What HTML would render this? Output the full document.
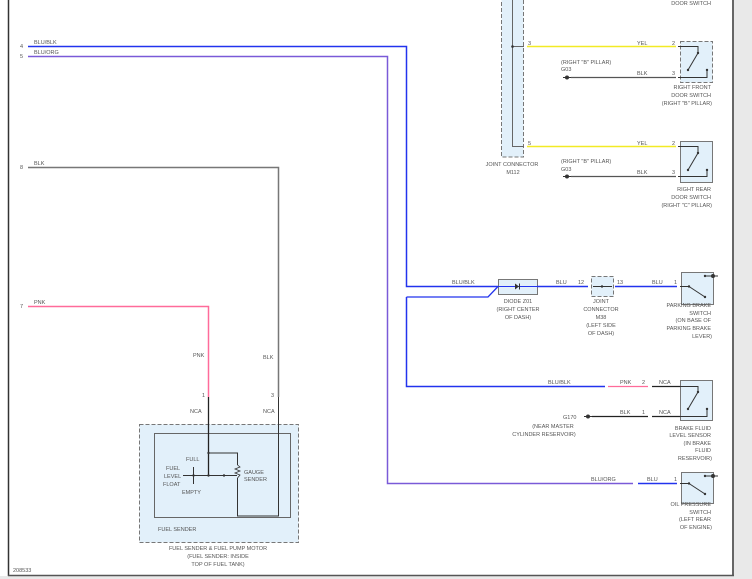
<!DOCTYPE html>
<html><head><meta charset="utf-8"><style>
html,body{margin:0;padding:0;background:#e9e9e9;}
svg{display:block;}
text{font-family:"Liberation Sans",sans-serif;font-size:5.5px;fill:#555;}
.r{text-anchor:end;}
.c{text-anchor:middle;}
</style></head><body>
<svg width="752" height="579" viewBox="0 0 752 579" xmlns="http://www.w3.org/2000/svg">
<rect x="0" y="0" width="734" height="576" fill="#fff"/>
<line x1="8.5" y1="0" x2="8.5" y2="576" stroke="#333" stroke-width="1.5"/>
<line x1="733" y1="0" x2="733" y2="576" stroke="#333" stroke-width="1.5"/>
<line x1="8" y1="575.5" x2="734" y2="575.5" stroke="#555" stroke-width="1.5"/>

<text x="20" y="48">4</text><text x="34" y="44">BLU/BLK</text>
<text x="20" y="58">5</text><text x="34" y="54">BLU/ORG</text>
<text x="20" y="169">8</text><text x="34" y="165">BLK</text>
<text x="20" y="308">7</text><text x="34" y="304">PNK</text>
<polyline points="28,46.5 406.5,46.5 406.5,286.5 498,286.5" fill="none" stroke="#2233ee" stroke-width="1.5"/>
<polyline points="406.5,297 488,297 498,286.5" fill="none" stroke="#2233ee" stroke-width="1.3"/>
<polyline points="406.5,297 406.5,386.5 605,386.5" fill="none" stroke="#2233ee" stroke-width="1.5"/>
<polyline points="28,56.5 387.5,56.5 387.5,483.5 633,483.5" fill="none" stroke="#7a5ad8" stroke-width="1.5"/>
<polyline points="28,167.5 278.5,167.5 278.5,397" fill="none" stroke="#777" stroke-width="1.5"/>
<polyline points="28,306.5 208.5,306.5 208.5,397" fill="none" stroke="#ff6b9a" stroke-width="1.5"/>
<text x="193" y="357">PNK</text><text x="263" y="359">BLK</text>

<rect x="501.5" y="-2" width="22" height="159" fill="#e2f0fa" stroke="#777" stroke-dasharray="4,2"/>
<polyline points="512.5,0 512.5,46.5 524,46.5" fill="none" stroke="#666"/>
<polyline points="512.5,46.5 512.5,146.5 524,146.5" fill="none" stroke="#666"/>
<circle cx="512.5" cy="46.5" r="1.3" fill="#333"/>
<text x="528" y="45">3</text><text x="528" y="145">5</text>
<text x="512" y="166" class="c">JOINT CONNECTOR</text><text x="513" y="174" class="c">M112</text>

<line x1="527" y1="46.5" x2="676" y2="46.5" stroke="#f2ea25" stroke-width="1.6"/>
<line x1="527" y1="146.5" x2="676" y2="146.5" stroke="#f2ea25" stroke-width="1.6"/>
<text x="637" y="45">YEL</text><text x="637" y="145">YEL</text>
<text x="672" y="45">2</text><text x="672" y="145">2</text>
<line x1="571" y1="77.5" x2="676" y2="77.5" stroke="#555" stroke-width="1.2"/>
<line x1="571" y1="176.5" x2="676" y2="176.5" stroke="#555" stroke-width="1.2"/>
<text x="637" y="75">BLK</text><text x="637" y="174">BLK</text>
<text x="672" y="75">3</text><text x="672" y="174">3</text>
<circle cx="567" cy="77.5" r="2" fill="#333"/><line x1="563" y1="77.5" x2="571" y2="77.5" stroke="#333"/>
<circle cx="567" cy="176.5" r="2" fill="#333"/><line x1="563" y1="176.5" x2="571" y2="176.5" stroke="#333"/>
<text x="561" y="64">(RIGHT "B" PILLAR)</text><text x="561" y="71">G03</text>
<text x="561" y="163">(RIGHT "B" PILLAR)</text><text x="561" y="171">G03</text>

<rect x="680.5" y="41.5" width="32" height="41" fill="#e2f0fa" stroke="#777" stroke-dasharray="4,2"/>
<polyline points="678,46.5 698,46.5 698,53" fill="none" stroke="#333"/>
<line x1="698" y1="53" x2="688" y2="70" stroke="#333"/>
<circle cx="698" cy="53" r="1.2" fill="#333"/><circle cx="688" cy="70" r="1.2" fill="#333"/><circle cx="707" cy="70" r="1.2" fill="#333"/>
<polyline points="678,77.5 707,77.5 707,70" fill="none" stroke="#333"/>
<text x="711" y="5" class="r">DOOR SWITCH</text>
<text x="711" y="89" class="r">RIGHT FRONT</text><text x="711" y="97" class="r">DOOR SWITCH</text><text x="712" y="105" class="r">(RIGHT "B" PILLAR)</text>

<rect x="680.5" y="141.5" width="32" height="41" fill="#e2f0fa" stroke="#777"/>
<polyline points="678,146.5 698,146.5 698,153" fill="none" stroke="#333"/>
<line x1="698" y1="153" x2="688" y2="170" stroke="#333"/>
<circle cx="698" cy="153" r="1.2" fill="#333"/><circle cx="688" cy="170" r="1.2" fill="#333"/><circle cx="707" cy="170" r="1.2" fill="#333"/>
<polyline points="678,176.5 707,176.5 707,170" fill="none" stroke="#333"/>
<text x="711" y="191" class="r">RIGHT REAR</text><text x="711" y="199" class="r">DOOR SWITCH</text><text x="712" y="207" class="r">(RIGHT "C" PILLAR)</text>

<text x="452" y="284">BLU/BLK</text>
<rect x="498.5" y="279.5" width="39" height="15" fill="#e2f0fa" stroke="#777"/>
<line x1="498" y1="286.5" x2="537" y2="286.5" stroke="#2233ee"/>
<polygon points="515,283.5 515,289.5 519,286.5" fill="#333"/><line x1="519.5" y1="283.5" x2="519.5" y2="289.5" stroke="#333"/>
<text x="518" y="303" class="c">DIODE Z01</text><text x="518" y="311" class="c">(RIGHT CENTER</text><text x="518" y="319" class="c">OF DASH)</text>
<line x1="537" y1="286.5" x2="588" y2="286.5" stroke="#2233ee" stroke-width="1.5"/>
<text x="556" y="284">BLU</text><text x="578" y="284">12</text>
<rect x="591.5" y="276.5" width="22" height="20" fill="#e2f0fa" stroke="#777" stroke-dasharray="4,2"/>
<line x1="593" y1="286.5" x2="612" y2="286.5" stroke="#333"/><circle cx="602" cy="286.5" r="1.2" fill="#333"/>
<text x="617" y="284">13</text>
<line x1="615" y1="286.5" x2="677" y2="286.5" stroke="#2233ee" stroke-width="1.5"/>
<text x="652" y="284">BLU</text><text x="674" y="284">1</text>
<text x="601" y="303" class="c">JOINT</text><text x="601" y="311" class="c">CONNECTOR</text><text x="601" y="319" class="c">M38</text><text x="601" y="327" class="c">(LEFT SIDE</text><text x="601" y="335" class="c">OF DASH)</text>

<rect x="681.5" y="272.5" width="32" height="32" fill="#e2f0fa" stroke="#777"/>
<line x1="680" y1="286.5" x2="689" y2="286.5" stroke="#333"/>
<line x1="689" y1="286.5" x2="705" y2="297" stroke="#333"/>
<circle cx="689" cy="286.5" r="1.2" fill="#333"/><circle cx="705" cy="297" r="1.2" fill="#333"/>
<line x1="705" y1="276" x2="718" y2="276" stroke="#333"/><circle cx="713" cy="276" r="2" fill="#333"/><circle cx="705" cy="276" r="1.2" fill="#333"/>
<text x="711" y="307" class="r">PARKING BRAKE</text><text x="711" y="315" class="r">SWITCH</text><text x="711" y="322" class="r">(ON BASE OF</text><text x="711" y="330" class="r">PARKING BRAKE</text><text x="712" y="338" class="r">LEVER)</text>

<text x="548" y="384">BLU/BLK</text>
<line x1="608" y1="386.5" x2="648" y2="386.5" stroke="#ff6b9a" stroke-width="1.3"/>
<text x="620" y="384">PNK</text><text x="642" y="384">2</text>
<line x1="652" y1="386.5" x2="681" y2="386.5" stroke="#222" stroke-width="1.2"/>
<text x="659" y="384">NCA</text>
<line x1="592" y1="416.5" x2="648" y2="416.5" stroke="#222" stroke-width="1.2"/>
<circle cx="588" cy="416.5" r="2" fill="#333"/><line x1="584" y1="416.5" x2="592" y2="416.5" stroke="#333"/>
<text x="563" y="419">G170</text><text x="620" y="414">BLK</text><text x="642" y="414">1</text>
<line x1="652" y1="416.5" x2="681" y2="416.5" stroke="#222" stroke-width="1.2"/>
<text x="659" y="414">NCA</text>
<text x="553" y="428" class="c">(NEAR MASTER</text><text x="544" y="436" class="c">CYLINDER RESERVOIR)</text>
<rect x="680.5" y="380.5" width="32" height="40" fill="#e2f0fa" stroke="#777"/>
<polyline points="680,386.5 698,386.5 698,392" fill="none" stroke="#333"/>
<line x1="698" y1="392" x2="688" y2="409" stroke="#333"/>
<circle cx="698" cy="392" r="1.2" fill="#333"/><circle cx="688" cy="409" r="1.2" fill="#333"/><circle cx="707" cy="409" r="1.2" fill="#333"/>
<polyline points="680,416.5 707,416.5 707,409" fill="none" stroke="#333"/>
<text x="711" y="430" class="r">BRAKE FLUID</text><text x="711" y="437" class="r">LEVEL SENSOR</text><text x="711" y="445" class="r">(IN BRAKE</text><text x="711" y="452" class="r">FLUID</text><text x="712" y="460" class="r">RESERVOIR)</text>

<text x="591" y="481">BLU/ORG</text>
<line x1="638" y1="483.5" x2="677" y2="483.5" stroke="#2233ee" stroke-width="1.5"/>
<text x="647" y="481">BLU</text><text x="674" y="481">1</text>
<rect x="681.5" y="472.5" width="32" height="31" fill="#e2f0fa" stroke="#777"/>
<line x1="680" y1="483.5" x2="689" y2="483.5" stroke="#333"/>
<line x1="689" y1="483.5" x2="705" y2="494" stroke="#333"/>
<circle cx="689" cy="483.5" r="1.2" fill="#333"/><circle cx="705" cy="494" r="1.2" fill="#333"/>
<line x1="705" y1="476" x2="718" y2="476" stroke="#333"/><circle cx="713" cy="476" r="2" fill="#333"/><circle cx="705" cy="476" r="1.2" fill="#333"/>
<text x="711" y="506" class="r">OIL PRESSURE</text><text x="711" y="514" class="r">SWITCH</text><text x="711" y="521" class="r">(LEFT REAR</text><text x="712" y="529" class="r">OF ENGINE)</text>

<text x="202" y="397">1</text><text x="271" y="397">3</text>
<text x="190" y="413">NCA</text><text x="263" y="413">NCA</text>
<rect x="139.5" y="424.5" width="159" height="118" fill="#e2f0fa" stroke="#777" stroke-dasharray="4,2"/>
<rect x="154.5" y="433.5" width="136" height="84" fill="#e2f0fa" stroke="#666"/>
<line x1="208.5" y1="397" x2="208.5" y2="475" stroke="#222" stroke-width="1.3"/>
<polyline points="208.5,453 237.5,453 237.5,465" fill="none" stroke="#333"/>
<polyline points="237.5,478 237.5,516 278.5,516 278.5,397" fill="none" stroke="#333"/>
<polyline points="237.5,465 240,467 235,469 240,471 235,473 240,475 237.5,478" fill="none" stroke="#333" stroke-width="0.8"/>
<line x1="183" y1="475.5" x2="237" y2="475.5" stroke="#333"/>
<line x1="193.5" y1="467" x2="193.5" y2="484" stroke="#333"/>
<circle cx="193.5" cy="475.5" r="1.2" fill="#333"/><circle cx="208.5" cy="475.5" r="1.2" fill="#333"/><circle cx="208.5" cy="453" r="1.2" fill="#333"/><circle cx="224" cy="475.5" r="1.2" fill="#333"/>
<text x="186" y="461">FULL</text><text x="166" y="470">FUEL</text><text x="164" y="478">LEVEL</text><text x="163" y="486">FLOAT</text><text x="182" y="494">EMPTY</text>
<text x="244" y="474">GAUGE</text><text x="244" y="481">SENDER</text>
<text x="158" y="531">FUEL SENDER</text>
<text x="218" y="550" class="c">FUEL SENDER &amp; FUEL PUMP MOTOR</text><text x="218" y="558" class="c">(FUEL SENDER: INSIDE</text><text x="218" y="566" class="c">TOP OF FUEL TANK)</text>
<text x="13" y="572">208533</text>
</svg>
</body></html>
